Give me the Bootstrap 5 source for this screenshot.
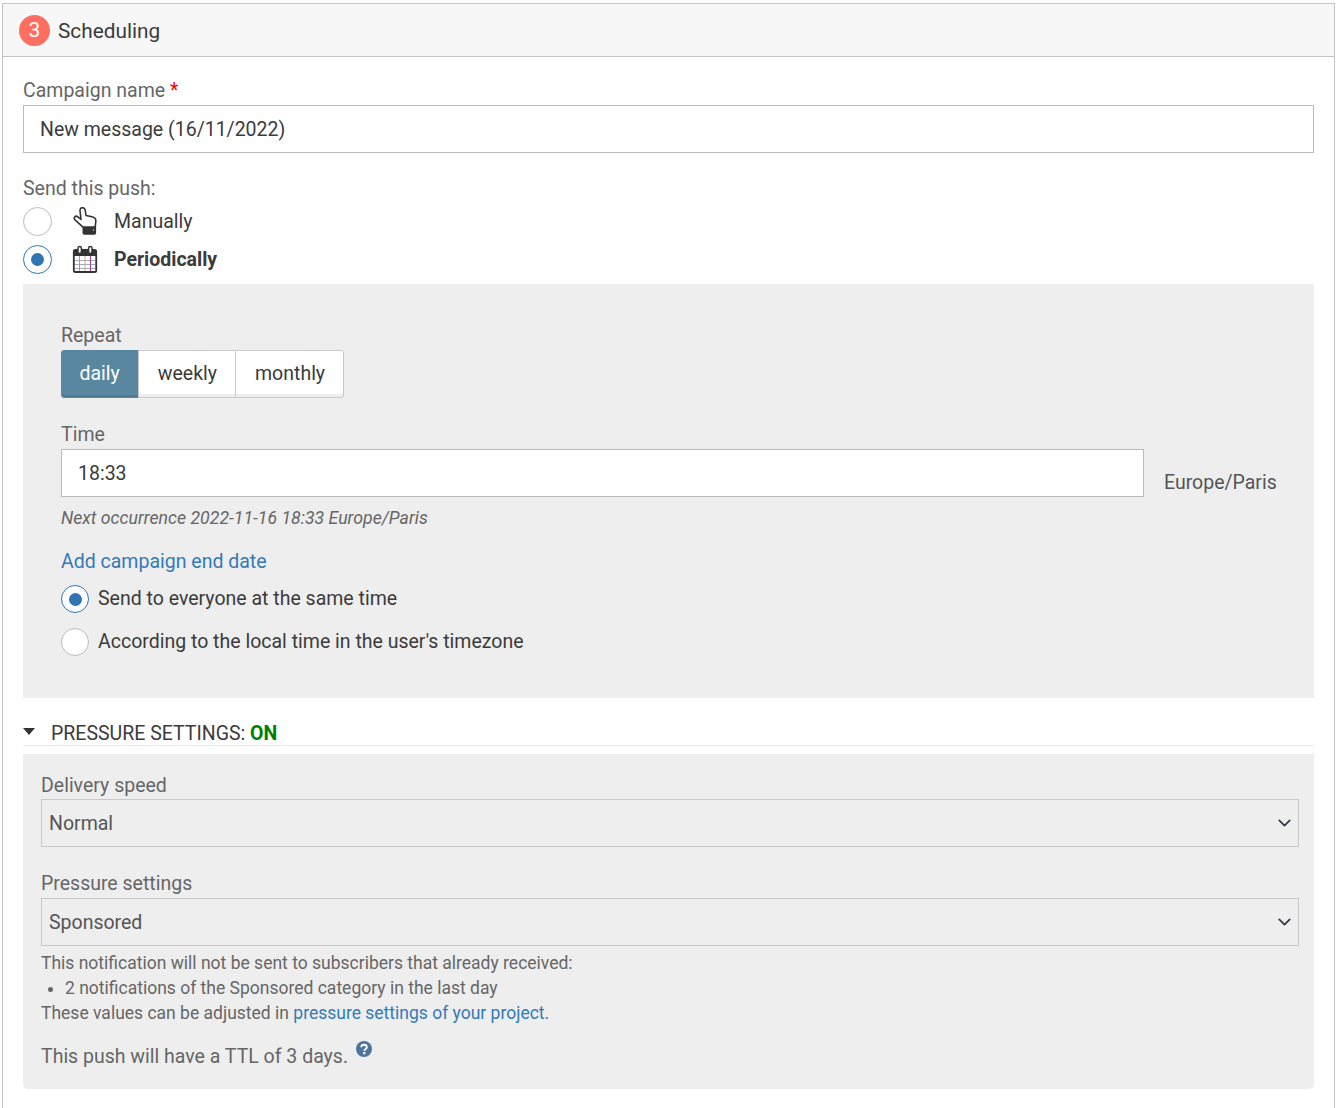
<!DOCTYPE html>
<html lang="en">
<head>
<meta charset="utf-8">
<title>Scheduling</title>
<link href="https://cdn.jsdelivr.net/npm/bootstrap@5.3.0/dist/css/bootstrap.min.css" rel="stylesheet">
<style>
html,body{height:1108px;overflow:hidden}
body{font-family:Roboto,"Liberation Sans",sans-serif;font-size:19.5px;line-height:1.25;color:#3b3b3b;background:#fff;padding:3px 1px 0 2px}
.sched-card{border:1px solid #c4c4c4;border-radius:0;height:1200px;display:block}
.sched-head{height:53px;background:#f7f7f7;border-bottom:1px solid #c4c4c4;padding:0 16px;border-radius:0!important;font-size:20.800px;color:#3b3b3b}
.head-title{padding-top:4px}
.step-dot{width:31px;height:31px;border-radius:50%;background:#ff6f61;color:#fff;font-size:21px;margin-right:8px}
.sched-body{padding:21px 20px 0 20px}
.fld-label{color:#666;margin:0;display:block;line-height:25px;height:27px}
.req{color:#f00}
.fld-input{height:48px;border:1px solid #bbb;border-radius:0;font-size:19.500px;color:#3b3b3b;padding:0 16px;line-height:46px}
.fld-input:focus{border-color:#bbb;box-shadow:none}
.push-label{margin-top:23px;height:26px;line-height:25px}
.choice-row{height:38px;margin:0}
.choice-text{padding-top:2px}
.radio-dot{appearance:none;width:29px;height:29px;border-radius:50%;border:1px solid #bbb;background:#fff;margin:0;flex:none;display:inline-block;position:relative}
.radio-dot.is-on{border-color:#2f75b0}
.radio-dot.is-on::after{content:"";position:absolute;left:7px;top:7px;width:13px;height:13px;border-radius:50%;background:#2f75b0}
.send-icon{width:26px;height:28px;margin:0 16px 0 20px;flex:none}
.panel-top{background:#eee;margin-top:6px;height:414px;padding:39px 38px 0}
.repeat-group .btn{height:48px;font-size:19.500px;line-height:46px;padding:0 18.500px;background:#fff;border:1px solid #c8c8c8;box-shadow:inset 0 -3px 0 #eee;color:#3b3b3b;border-radius:3px}
.repeat-group .btn.is-active{background:#58879f;border-color:#58879f;box-shadow:inset 0 -2px 0 #4f7c93;color:#fff;padding-left:17.500px}
.repeat-group .btn+.btn{margin-left:-1px;padding-right:17.500px}
.repeat-group .btn:last-child{padding-left:19.500px;padding-right:17.500px}
.time-row{margin-top:24px}
.tz-note{color:#555;padding-left:20px;width:132px;flex:none;padding-top:21px;line-height:25px;white-space:nowrap}
.occur{font-style:italic;font-size:17.700px;color:#666;line-height:25px;margin-top:9px}
.end-link{display:block;color:#337ab7;text-decoration:none;margin-top:18px;line-height:25px}
.zone-row{margin:0;height:28px}
.zone-row .radio-dot{margin-right:9px;width:28px;height:28px}
.zone-row .radio-dot.is-on::after{left:6.500px;top:6.500px}
.zone-row+.zone-row{margin-top:15px}
.zone-first{margin-top:11px}
.pressure-head{margin-top:22px;height:26px;border-bottom:1px solid #eaeaea;color:#3b3b3b;line-height:27px;font-size:19.500px}
.pressure-head>span:last-child{padding-top:2px}
.caret-mark{width:0;height:0;border-left:6px solid transparent;border-right:6px solid transparent;border-top:7px solid #333;margin-right:16px;flex:none;margin-top:-2px}
.on-state{color:#008000;font-weight:700}
.panel-low{background:#eee;margin-top:8px;height:335px;padding:19px 15px 0 18px;border-radius:0 0 5px 5px}
.low-first{height:26px}
.sel-box{height:48px;background-color:#eee;border:1px solid #c8c8c8;border-radius:0;font-size:19.500px;color:#555;padding:2px 40px 0 7px;line-height:44px;background-position:right 4px center;background-size:19px 14px}
.sel-box:focus{border-color:#c8c8c8;box-shadow:none}
.mt-sel{margin-top:24px}
.note-txt{font-size:17.500px;line-height:25px;color:#666;margin-top:5px}
.note-txt ul{margin:0;padding-left:24px}
.note-txt a{color:#337ab7;text-decoration:none}
.ttl-line{color:#666;margin-top:15px;line-height:25px}
.help-ico{width:16px;height:16px;margin-left:3px;vertical-align:6px}
</style>
</head>
<body>
<div class="card sched-card">
  <div class="card-header d-flex align-items-center sched-head">
    <span class="step-dot d-inline-flex align-items-center justify-content-center">3</span><span class="head-title">Scheduling</span>
  </div>
  <div class="sched-body">
    <label class="fld-label" for="cname">Campaign name <span class="req">*</span></label>
    <input id="cname" class="form-control fld-input" value="New message (16/11/2022)">

    <div class="fld-label push-label">Send this push:</div>
    <div class="d-flex align-items-center choice-row">
      <span class="radio-dot"></span>
      <svg class="send-icon" viewBox="0 0 26 28" fill="none" stroke="#333" stroke-width="1.600" stroke-linejoin="round"><path d="M8 3.500c-.3-3.500 4.700-3.800 5.200-.3l.8 5.300 6 1.300c2.700.6 4 2 3.800 4.500l-.6 6H11.300L3 12.800c-1.800-2 .2-4.600 2.600-3.100L9 12.500z"/><path d="M11.300 20.300h12v5.700a1 1 0 0 1-1 1h-10a1 1 0 0 1-1-1z" fill="#333"/><path d="M20.800 23h1.200" stroke="#fff" stroke-width="1"/></svg>
      <span class="choice-text">Manually</span>
    </div>
    <div class="d-flex align-items-center choice-row">
      <span class="radio-dot is-on"></span>
      <svg class="send-icon" viewBox="0 0 26 28" fill="none"><rect x="1.800" y="5" width="22.400" height="22" rx="1.600" fill="#fff" stroke="#333" stroke-width="1.800"/><rect x="1.800" y="5" width="22.400" height="6" fill="#333"/><path d="M3 15.500h20M3 19.500h20M3 23.500h20" stroke="#a3adba" stroke-width="1"/><path d="M7.500 11v15" stroke="#7ea4d0" stroke-width="1"/><path d="M13 11v15" stroke="#c9a87e" stroke-width="1"/><path d="M18.500 11v15" stroke="#9a4a9e" stroke-width="1.200"/><rect x="6" y="1.500" width="3.400" height="7" rx="1.700" fill="#fff" stroke="#333" stroke-width="1.500"/><rect x="16.600" y="1.500" width="3.400" height="7" rx="1.700" fill="#fff" stroke="#333" stroke-width="1.500"/></svg>
      <strong class="choice-text">Periodically</strong>
    </div>

    <div class="panel-top">
      <div class="fld-label">Repeat</div>
      <div class="btn-group repeat-group" role="group">
        <button type="button" class="btn is-active">daily</button>
        <button type="button" class="btn">weekly</button>
        <button type="button" class="btn">monthly</button>
      </div>
      <div class="time-row">
        <label class="fld-label" for="ctime">Time</label>
        <div class="d-flex">
          <input id="ctime" class="form-control fld-input" value="18:33">
          <div class="tz-note">Europe/Paris</div>
        </div>
      </div>
      <div class="occur">Next occurrence 2022-11-16 18:33 Europe/Paris</div>
      <a class="end-link" href="#">Add campaign end date</a>
      <div class="d-flex align-items-center zone-row zone-first"><span class="radio-dot is-on"></span><span>Send to everyone at the same time</span></div>
      <div class="d-flex align-items-center zone-row"><span class="radio-dot"></span><span>According to the local time in the user's timezone</span></div>
    </div>

    <div class="d-flex align-items-center pressure-head">
      <span class="caret-mark"></span><span>PRESSURE SETTINGS: <span class="on-state">ON</span></span>
    </div>
    <div class="panel-low">
      <label class="fld-label low-first" for="speed">Delivery speed</label>
      <select id="speed" class="form-select sel-box"><option>Normal</option></select>
      <label class="fld-label mt-sel" for="press">Pressure settings</label>
      <select id="press" class="form-select sel-box"><option>Sponsored</option></select>
      <div class="note-txt">
        This notification will not be sent to subscribers that already received:
        <ul><li>2 notifications of the Sponsored category in the last day</li></ul>
        These values can be adjusted in <a href="#">pressure settings of your project.</a>
      </div>
      <div class="ttl-line">This push will have a TTL of 3 days.
        <svg class="help-ico" viewBox="0 0 16 16"><circle cx="8" cy="8" r="8" fill="#4f749c"/><path d="M5.300 6.200c0-3.200 5.500-3.200 5.500 0 0 2-2.500 2-2.500 3.500" fill="none" stroke="#fff" stroke-width="1.900"/><rect x="7.200" y="11" width="2.200" height="2.200" fill="#fff"/></svg>
      </div>
    </div>
  </div>
</div>
<script src="https://cdn.jsdelivr.net/npm/bootstrap@5.3.0/dist/js/bootstrap.bundle.min.js"></script>
</body>
</html>
